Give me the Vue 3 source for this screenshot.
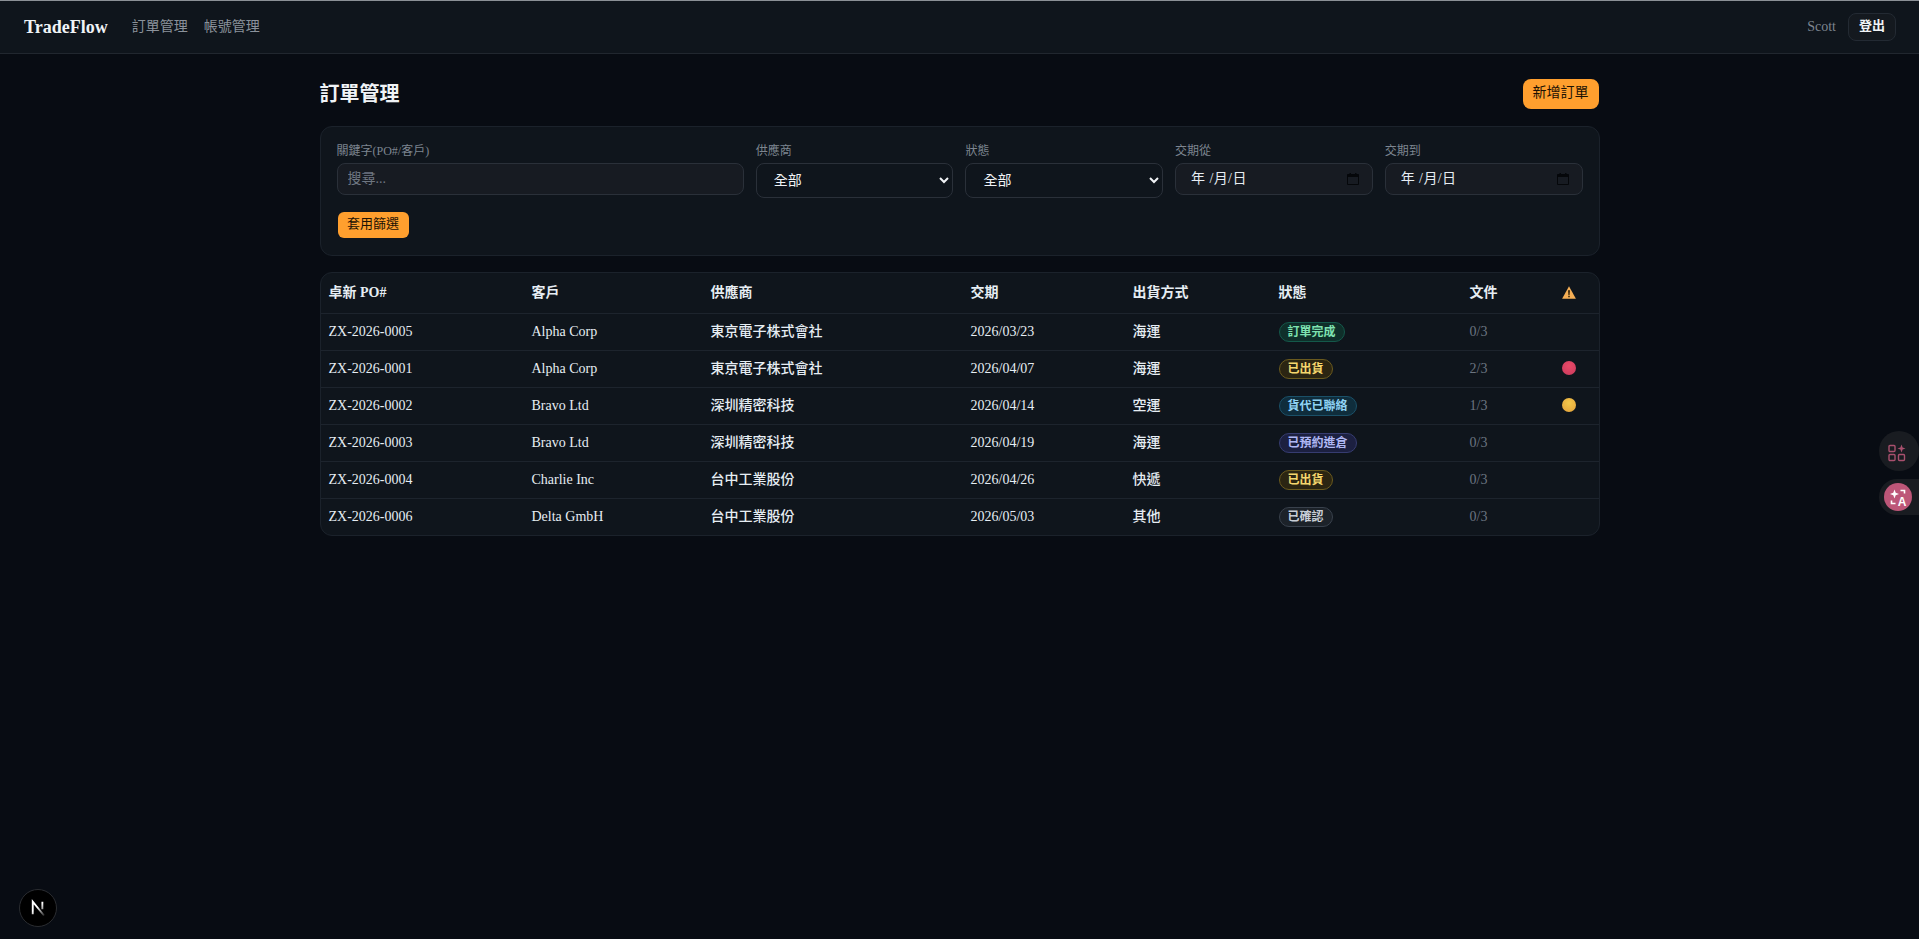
<template>
  <div class="page">
    <nav class="navbar">
      <div class="nav-left">
        <span class="logo">TradeFlow</span>
        <a class="nav-link">訂單管理</a>
        <a class="nav-link">帳號管理</a>
      </div>
      <div class="nav-right">
        <span class="user">Scott</span>
        <button class="btn-logout">登出</button>
      </div>
    </nav>

    <main class="container">
      <div class="page-header">
        <h1>訂單管理</h1>
        <button class="btn-primary">新增訂單</button>
      </div>

      <section class="filter-card">
        <div class="filter-grid">
          <div class="field">
            <label>關鍵字(PO#/客戶)</label>
            <input class="text-input" type="text" placeholder="搜尋..." />
          </div>
          <div class="field">
            <label>供應商</label>
            <select class="select-input"><option>全部</option></select>
          </div>
          <div class="field">
            <label>狀態</label>
            <select class="select-input"><option>全部</option></select>
          </div>
          <div v-for="label in dateLabels" :key="label" class="field">
            <label>{{ label }}</label>
            <div class="date-input">
              <span>年 /月/日</span>
              <svg class="calendar" viewBox="0 0 12 12" width="12" height="12">
                <path d="M0.500 1.500h11v10h-11z" fill="none" stroke="#05070a" stroke-width="1" />
                <path d="M0.500 1.500h11v2.500h-11zM2.500 0h1.500v2H2.500zM8 0h1.500v2H8z" fill="#05070a" />
              </svg>
            </div>
          </div>
        </div>
        <button class="btn-apply">套用篩選</button>
      </section>

      <section class="table-card">
        <table>
          <colgroup>
            <col v-for="w in colWidths" :key="w.id" :style="{ width: w.px + 'px' }" />
          </colgroup>
          <thead>
            <tr>
              <th>卓新 PO#</th>
              <th>客戶</th>
              <th>供應商</th>
              <th>交期</th>
              <th>出貨方式</th>
              <th>狀態</th>
              <th>文件</th>
              <th>
                <svg class="warn" viewBox="0 0 14 13" width="14" height="13">
                  <path d="M7 0.300 13.900 12.700H0.100z" fill="#f4ae55" />
                  <path d="M6 4.200h2l-0.400 4.700H6.400zM6.200 9.700h1.600v1.600H6.200z" fill="#3a2608" />
                </svg>
              </th>
            </tr>
          </thead>
          <tbody>
            <tr v-for="order in orders" :key="order.po">
              <td>{{ order.po }}</td>
              <td>{{ order.customer }}</td>
              <td class="cjk">{{ order.supplier }}</td>
              <td>{{ order.date }}</td>
              <td class="cjk">{{ order.ship }}</td>
              <td><span class="badge" :class="order.tone">{{ order.status }}</span></td>
              <td class="docs">{{ order.docs }}</td>
              <td><span v-if="order.alert" class="dot" :class="order.alert"></span></td>
            </tr>
          </tbody>
        </table>
      </section>
    </main>

    <!-- 右側浮動按鈕 -->
    <div class="float-btn apps">
      <svg viewBox="0 0 20 20" width="20" height="20" fill="none" stroke="#a8506e" stroke-width="1.400">
        <rect x="2" y="2.500" width="6" height="6" rx="1" />
        <rect x="2" y="11.500" width="6" height="6" rx="1" />
        <rect x="11.500" y="11.500" width="6" height="6" rx="1" />
        <path d="M14.500 1.500 15.600 4.400 18.500 5.500 15.600 6.600 14.500 9.500 13.400 6.600 10.500 5.500 13.400 4.400z" fill="#a8506e" stroke="none" />
      </svg>
    </div>
    <div class="float-btn translate">
      <span class="translate-circle">
        <svg viewBox="0 0 28 28" width="28" height="28" fill="none">
          <path d="M10.500 6.500 11.700 9.800 15 11 11.700 12.200 10.500 15.500 9.300 12.200 6 11 9.300 9.800z" fill="#fff" />
          <path d="M16.500 7.500h4v3M7.500 17.500v3h4" stroke="#fff" stroke-width="1.600" />
          <text x="18" y="22.500" class="translate-a">A</text>
        </svg>
      </span>
    </div>

    <!-- Next.js 開發指示器 -->
    <div class="next-badge">
      <svg viewBox="0 0 16 16" width="20" height="20" fill="none">
        <defs>
          <linearGradient id="nextFade" x1="4" y1="3" x2="13" y2="14" gradientUnits="userSpaceOnUse">
            <stop offset="0.400" stop-color="#fff" />
            <stop offset="1" stop-color="#fff" stop-opacity="0.150" />
          </linearGradient>
        </defs>
        <path d="M3.800 13V3l9 11" stroke="url(#nextFade)" stroke-width="1.500" />
        <path d="M11.500 3v6" stroke="url(#nextFade)" stroke-width="1.500" />
      </svg>
    </div>
  </div>
</template>

<script setup>
const dateLabels = ['交期從', '交期到']

const colWidths = [
  { id: 'po', px: 203 },
  { id: 'customer', px: 179 },
  { id: 'supplier', px: 260 },
  { id: 'date', px: 162 },
  { id: 'ship', px: 146 },
  { id: 'status', px: 191 },
  { id: 'docs', px: 92 },
  { id: 'alert', px: 45 }
]

const orders = [
  { po: 'ZX-2026-0005', customer: 'Alpha Corp', supplier: '東京電子株式會社', date: '2026/03/23', ship: '海運', status: '訂單完成', tone: 'green', docs: '0/3', alert: '' },
  { po: 'ZX-2026-0001', customer: 'Alpha Corp', supplier: '東京電子株式會社', date: '2026/04/07', ship: '海運', status: '已出貨', tone: 'yellow', docs: '2/3', alert: 'red' },
  { po: 'ZX-2026-0002', customer: 'Bravo Ltd', supplier: '深圳精密科技', date: '2026/04/14', ship: '空運', status: '貨代已聯絡', tone: 'blue', docs: '1/3', alert: 'amber' },
  { po: 'ZX-2026-0003', customer: 'Bravo Ltd', supplier: '深圳精密科技', date: '2026/04/19', ship: '海運', status: '已預約進倉', tone: 'indigo', docs: '0/3', alert: '' },
  { po: 'ZX-2026-0004', customer: 'Charlie Inc', supplier: '台中工業股份', date: '2026/04/26', ship: '快遞', status: '已出貨', tone: 'yellow', docs: '0/3', alert: '' },
  { po: 'ZX-2026-0006', customer: 'Delta GmbH', supplier: '台中工業股份', date: '2026/05/03', ship: '其他', status: '已確認', tone: 'grey', docs: '0/3', alert: '' }
]
</script>

<style>
html,
body {
  margin: 0;
  background: #080c13;
}
</style>

<style scoped>
.page {
  min-height: 939px;
  background: #080c13;
  color: #e6edf3;
  font-family: "Liberation Serif", "Noto Sans CJK TC", serif;
  font-size: 14px;
  box-sizing: border-box;
}

.navbar {
  display: flex;
  justify-content: space-between;
  align-items: center;
  height: 54px;
  box-sizing: border-box;
  padding: 0 23px 0 24px;
  background: #0f151c;
  border-top: 1px solid #8b9096;
  border-bottom: 1px solid #21272f;
}

.nav-left {
  display: flex;
  align-items: center;
  gap: 16px;
}

.logo {
  font-size: 18px;
  font-weight: 700;
  color: #f0f3f6;
  margin-right: 8px;
}

.nav-link {
  color: #8b929b;
  line-height: 20px;
}

.nav-right {
  display: flex;
  align-items: center;
  gap: 12px;
}

.user {
  color: #7d8590;
}

.btn-logout {
  width: 48px;
  height: 28px;
  padding: 0 0 3px;
  background: #14191f;
  color: #f0f3f6;
  border: 1px solid #232a33;
  border-radius: 8px;
  font: 700 13px/20px "Liberation Serif", "Noto Sans CJK TC", serif;
}

.container {
  width: 1280px;
  margin: 0 auto;
  padding-top: 25px;
}

.page-header {
  display: flex;
  justify-content: space-between;
  align-items: center;
  margin-bottom: 17px;
}

.page-header h1 {
  margin: 0;
  font-size: 20px;
  line-height: 26px;
  font-weight: 700;
  color: #f0f3f6;
}

.btn-primary,
.btn-apply {
  border: none;
  background: #ff9f2e;
  color: #1c1204;
  font-family: "Liberation Serif", "Noto Sans CJK TC", serif;
}

.btn-primary {
  width: 76px;
  height: 30px;
  padding: 0 0 2px;
  margin-right: 1px;
  border-radius: 8px;
  font-size: 14px;
  line-height: 18px;
}

.filter-card {
  height: 130px;
  box-sizing: border-box;
  padding: 16px;
  margin-bottom: 16px;
  background: #0f151c;
  border: 1px solid #1b222b;
  border-radius: 12px;
}

.filter-grid {
  display: grid;
  grid-template-columns: minmax(0, 2.06fr) repeat(4, minmax(0, 1fr));
  gap: 12px;
  align-items: start;
}

.field label {
  display: block;
  margin-bottom: 4px;
  font-size: 12px;
  line-height: 16px;
  color: #7d8590;
}

.text-input,
.date-input {
  width: 100%;
  height: 32px;
  box-sizing: border-box;
  background: #171b22;
  border: 1px solid #2a3039;
  border-radius: 8px;
  color: #e6edf3;
  font-family: "Liberation Serif", "Noto Sans CJK TC", serif;
  font-size: 14px;
}

.text-input {
  padding: 0 10px;
  outline: none;
}

.text-input::placeholder {
  color: #6e7681;
}

.select-input {
  width: 100%;
  height: 35px;
  box-sizing: border-box;
  padding: 0 10px 0 13px;
  background: #0f151c;
  border: 1px solid #2a3039;
  border-radius: 8px;
  color: #f0f3f6;
  font-family: "Liberation Serif", "Noto Sans CJK TC", serif;
  font-size: 14px;
}

.date-input {
  display: flex;
  justify-content: space-between;
  align-items: center;
  padding: 0 13px 1px 15px;
  line-height: 18px;
  letter-spacing: 0.4px;
}

.calendar {
  display: block;
  margin-top: 1px;
}

.btn-apply {
  display: block;
  width: 71px;
  height: 26px;
  margin: 14px 0 0 1px;
  padding: 0 0 2px;
  border-radius: 6px;
  font-size: 13px;
  line-height: 16px;
}

.table-card {
  overflow: hidden;
  background: #0f151c;
  border: 1px solid #1b222b;
  border-radius: 12px;
}

table {
  width: 100%;
  table-layout: fixed;
  border-collapse: separate;
  border-spacing: 0;
}

th,
td {
  padding: 0 8px;
  text-align: left;
  line-height: 20px;
  border-bottom: 1px solid #1d242d;
}

th {
  height: 41px;
  box-sizing: border-box;
  font-size: 14px;
  font-weight: 700;
  color: #e6edf3;
}

td {
  height: 37px;
  box-sizing: border-box;
  color: #e6edf3;
}

.cjk {
  font-weight: 500;
}

tbody tr:last-child td {
  border-bottom: none;
  height: 36px;
}

.docs {
  color: #6b7480;
}

.warn {
  display: block;
  margin-bottom: 1px;
}

.badge {
  display: inline-block;
  box-sizing: border-box;
  height: 20px;
  padding: 0 8px;
  border: 1px solid transparent;
  border-radius: 10px;
  font-size: 12px;
  line-height: 18px;
  font-weight: 700;
  vertical-align: middle;
}

.badge.green { color: #7ee2b0; background: #0f2f2a; border-color: #14584a; }
.badge.yellow { color: #f5d76e; background: #2b2512; border-color: #6a5a1e; }
.badge.blue { color: #8fd3f5; background: #0f2d3c; border-color: #1a5068; }
.badge.indigo { color: #b0b8f5; background: #1c2040; border-color: #363c70; }
.badge.grey { color: #c8ced6; background: #1c2229; border-color: #39414c; }

.dot {
  display: block;
  width: 14px;
  height: 14px;
  margin-bottom: 2px;
  border-radius: 50%;
}

.dot.red { background: radial-gradient(circle at 50% 35%, #ea4a68, #c83a5c); }
.dot.amber { background: radial-gradient(circle at 50% 35%, #f4c84a, #e2a03a); }

.float-btn {
  position: fixed;
  display: flex;
  align-items: center;
  justify-content: flex-start;
  box-sizing: border-box;
}

.apps {
  top: 431px;
  left: 1879px;
  width: 40px;
  height: 40px;
  padding-left: 8px;
  border-radius: 50%;
  background: #191c21;
}

.apps svg {
  margin-top: 3px;
}

.translate {
  top: 479px;
  left: 1879px;
  width: 40px;
  height: 36px;
  padding-left: 5px;
  border-radius: 18px 0 0 18px;
  background: #191c21;
}

.translate-circle {
  display: block;
  width: 28px;
  height: 28px;
  border-radius: 50%;
  background: #bd5678;
}

.translate-a {
  fill: #fff;
  font: 700 12px "Liberation Sans", sans-serif;
  text-anchor: middle;
}

.next-badge {
  position: fixed;
  left: 19px;
  bottom: 12px;
  display: flex;
  align-items: center;
  justify-content: center;
  width: 36px;
  height: 36px;
  border-radius: 50%;
  background: #000;
  border: 1px solid #2b2d31;
}
</style>
